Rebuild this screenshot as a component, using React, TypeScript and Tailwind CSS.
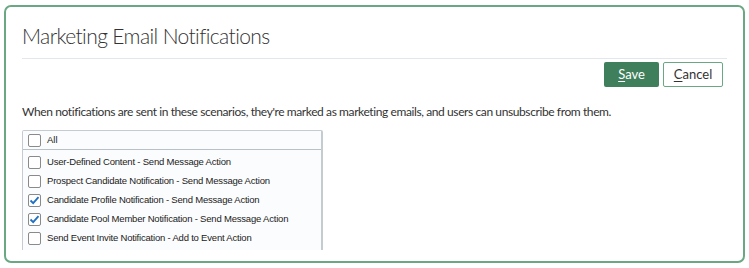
import React from "react";

const items = [
  { label: "User-Defined Content - Send Message Action", checked: false },
  { label: "Prospect Candidate Notification - Send Message Action", checked: false },
  { label: "Candidate Profile Notification - Send Message Action", checked: true },
  { label: "Candidate Pool Member Notification - Send Message Action", checked: true },
  { label: "Send Event Invite Notification - Add to Event Action", checked: false },
];

function Box({ checked }: { checked: boolean }) {
  return (
    <span className="flex h-[13px] w-[13px] shrink-0 items-center justify-center rounded-[2px] border border-[#8a8a8a] bg-white">
      {checked && (
        <svg width="11" height="11" viewBox="0 0 11 11">
          <path d="M1.5 5.5 L4.2 8.2 L9.5 2.2" fill="none" stroke="#1f6fc5" strokeWidth="1.8" />
        </svg>
      )}
    </span>
  );
}

export default function App() {
  return (
    <div className="h-[268px] w-[749px] bg-white p-[4px] pt-[5px]" style={{ fontFamily: "Lato, 'Noto Sans', sans-serif" }}>
      <div className="h-[258px] overflow-hidden rounded-[7px] border-2 border-[#6aa883] px-[16px] pt-[15px]">
        <h1 className="text-[21px] font-light leading-[28px] tracking-[-0.6px] text-[#333]">Marketing Email Notifications</h1>
        <div className="mt-[8px] h-px bg-[#e3e7ec]" />
        <div className="mt-[3px] flex justify-end gap-[4px] pr-[4px]">
          <button className="h-[25px] w-[55px] rounded-[2px] bg-[#3f7f5c] text-[13px] text-white">
            <span className="underline underline-offset-2">S</span>ave
          </button>
          <button className="h-[25px] w-[60px] rounded-[2px] border border-[#6aa883] bg-white text-[13px] text-[#333]">
            <span className="underline underline-offset-2">C</span>ancel
          </button>
        </div>
        <p className="mt-[16px] whitespace-nowrap text-[12px] leading-[18px] tracking-[-0.4px] text-[#333]">
          When notifications are sent in these scenarios, they're marked as marketing emails, and users can unsubscribe from them.
        </p>
        <div className="mt-[9px] w-[301px] rounded-t-[2px] border border-b-0 border-r-2 border-[#c4cbd1] bg-[#fbfcfd]" style={{ fontFamily: "'Liberation Sans', Arial, sans-serif" }}>
          <div className="flex h-[19px] items-center gap-[6px] border-b border-[#b9c1c7] pl-[5px] text-[9.5px] text-[#222]">
            <Box checked={false} />
            <span>All</span>
          </div>
          <div className="flex flex-col pb-[2px] pt-[3px]">
            {items.map((it) => (
              <div key={it.label} className="flex h-[19px] items-center gap-[6px] whitespace-nowrap pl-[5px] text-[9.5px] tracking-[-0.2px] text-[#222]">
                <Box checked={it.checked} />
                <span>{it.label}</span>
              </div>
            ))}
          </div>
        </div>
      </div>
    </div>
  );
}
